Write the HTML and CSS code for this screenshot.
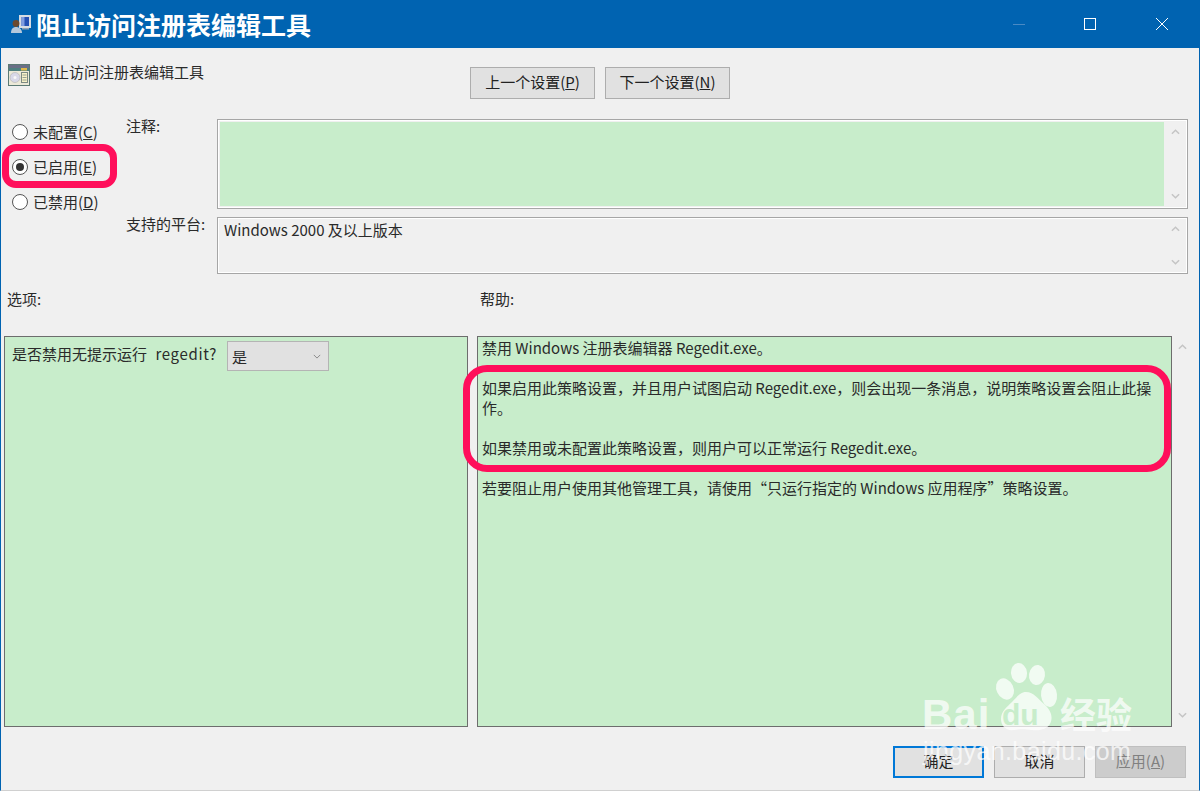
FILE: index.html
```html
<!DOCTYPE html>
<html lang="zh-CN">
<head>
<meta charset="utf-8">
<title>阻止访问注册表编辑工具</title>
<link rel="stylesheet" href="styles.css">
</head>
<body>
<div class="window">
  <header class="titlebar">
    <svg class="app-icon" width="20" height="20" viewBox="0 0 20 20">
      <rect x="8" y="1" width="12" height="13" fill="#d5dbe3"/>
      <rect x="10.5" y="3" width="7.5" height="9" fill="#2450b4"/>
      <rect x="10.5" y="3" width="3" height="9" fill="#7f9ce0"/>
      <rect x="11" y="14" width="7" height="1.5" fill="#8fa0b2"/>
      <circle cx="5" cy="9.5" r="3.4" fill="#6b4a30"/>
      <path d="M0 19c0-4 2-6 5-6s6 2 6 6z" fill="#b4c8dc"/>
    </svg>
    <h1 class="title">阻止访问注册表编辑工具</h1>
    <div class="caption-buttons">
      <span class="cap-btn"><svg width="14" height="14" viewBox="0 0 14 14"><path d="M1 7.5h12" stroke="#4a8ac4" fill="none"/></svg></span>
      <span class="cap-btn"><svg width="14" height="14" viewBox="0 0 14 14"><rect x="1.5" y="1.5" width="11" height="11" stroke="#fff" fill="none"/></svg></span>
      <span class="cap-btn"><svg width="14" height="14" viewBox="0 0 14 14"><path d="M1 1l12 12M13 1L1 13" stroke="#fff" fill="none"/></svg></span>
    </div>
  </header>

  <main class="content">
    <div class="head-row">
      <div class="policy-name">
        <svg class="policy-icon" width="22" height="22" viewBox="0 0 22 22">
          <rect x="0.5" y="0.5" width="21" height="21" fill="#ece9d8" stroke="#5c7a74"/>
          <rect x="1" y="1" width="20" height="3" fill="#6a6f86"/>
          <rect x="1" y="4" width="20" height="3" fill="#4f8080"/>
          <rect x="13" y="4" width="6" height="2.5" fill="#e0b84a"/>
          <circle cx="7" cy="13.5" r="5" fill="#d8d8e8" stroke="#a8a8a8" stroke-width="0.5"/>
          <circle cx="7" cy="13.5" r="1.5" fill="#f8f8f8"/>
          <rect x="13.5" y="8.5" width="6" height="10" fill="#f8f2c8" stroke="#7d8a84"/>
          <path d="M14.5 11h4M14.5 13.5h4M14.5 16h4" stroke="#7d8a84" stroke-width="0.8"/>
        </svg>
        <span>阻止访问注册表编辑工具</span>
      </div>
      <div class="nav-buttons">
        <button class="btn nav-btn">上一个设置(<u>P</u>)</button>
        <button class="btn nav-btn">下一个设置(<u>N</u>)</button>
      </div>
    </div>

    <div class="settings-row">
      <div class="radios">
        <div class="radio-row"><span class="radio"></span><span>未配置(<u>C</u>)</span></div>
        <div class="radio-row"><span class="radio checked"></span><span>已启用(<u>E</u>)</span></div>
        <div class="radio-row"><span class="radio"></span><span>已禁用(<u>D</u>)</span></div>
      </div>
      <div class="fields">
        <div class="field comment-field">
          <label class="field-label">注释:</label>
          <div class="box comment-box">
            <div class="box-fill"></div>
            <div class="mini-scroll"><svg class="chev" viewBox="0 0 10 6"><path d="M1 5l4-4 4 4"/></svg><svg class="chev" viewBox="0 0 10 6"><path d="M1 1l4 4 4-4"/></svg></div>
          </div>
        </div>
        <div class="field platform-field">
          <label class="field-label">支持的平台:</label>
          <div class="box platform-box">
            <div class="box-text">Windows 2000 及以上版本</div>
            <div class="mini-scroll"><svg class="chev" viewBox="0 0 10 6"><path d="M1 5l4-4 4 4"/></svg><svg class="chev" viewBox="0 0 10 6"><path d="M1 1l4 4 4-4"/></svg></div>
          </div>
        </div>
      </div>
    </div>

    <div class="section-labels">
      <span class="section-options">选项:</span>
      <span class="section-help">帮助:</span>
    </div>

    <div class="panels">
      <div class="panel options-panel">
        <span class="option-label">是否禁用无提示运行 <span class="latin">regedit?</span></span>
        <div class="select"><span>是</span><svg class="select-chev" viewBox="0 0 10 6"><path d="M1 1l4 4 4-4"/></svg></div>
      </div>
      <div class="panel help-panel">
        <p>禁用 Windows 注册表编辑器 Regedit.exe。</p>
        <p>如果启用此策略设置，并且用户试图启动 Regedit.exe，则会出现一条消息，说明策略设置会阻止此操作。</p>
        <p>如果禁用或未配置此策略设置，则用户可以正常运行 Regedit.exe。</p>
        <p>若要阻止用户使用其他管理工具，请使用“只运行指定的 Windows 应用程序”策略设置。</p>
      </div>
      <div class="help-scroll"><svg class="chev" viewBox="0 0 10 6"><path d="M1 5l4-4 4 4"/></svg><svg class="chev" viewBox="0 0 10 6"><path d="M1 1l4 4 4-4"/></svg></div>
    </div>

    <footer class="footer">
      <button class="btn foot-btn default">确定</button>
      <button class="btn foot-btn">取消</button>
      <button class="btn foot-btn disabled">应用(<u>A</u>)</button>
    </footer>
  </main>

  <div class="mark mark-radio"></div>
  <div class="mark mark-help"></div>

  <div class="watermark">
    <svg class="paw" width="240" height="120" viewBox="0 0 240 120">
      <ellipse cx="84" cy="29" rx="8.5" ry="11" transform="rotate(-25 84 29)"/>
      <ellipse cx="98" cy="13" rx="8" ry="10" transform="rotate(-6 98 13)"/>
      <ellipse cx="116" cy="15" rx="8" ry="10" transform="rotate(8 116 15)"/>
      <ellipse cx="128" cy="35" rx="8" ry="12" transform="rotate(-6 128 35)"/>
      <path d="M105 32c8 0 12 7 18 12 8 7 9 14 6 20-3 5-10 7-18 6-7-1-12-1-18 0-8 1-13-4-13-11 0-8 6-12 11-17 5-5 8-10 14-10z"/>
    </svg>
    <span class="wm-bai">Bai</span>
    <span class="wm-du">du</span>
    <span class="wm-cn">经验</span>
    <span class="wm-url">jingyan.baidu.com</span>
  </div>
</div>
</body>
</html>
```

FILE: styles.css
```css
* { box-sizing: border-box; }
html, body { margin: 0; padding: 0; }
body {
  width: 1200px;
  height: 791px;
  overflow: hidden;
  font-family: "Noto Sans CJK SC", "Liberation Sans", sans-serif;
  font-size: 15px;
  color: #2a2a2a;
  background: #f0f0f0;
}
.window {
  position: relative;
  width: 1200px;
  height: 791px;
  border: 1px solid #0063b1;
  border-top: 0;
  border-bottom-color: #d0d0d0;
  display: flex;
  flex-direction: column;
  overflow: hidden;
}
.titlebar {
  flex: 0 0 48px;
  background: #0063b1;
  display: flex;
  align-items: center;
  padding-left: 10px;
}
.app-icon { flex: none; margin-right: 5px; }
.title {
  margin: 0;
  flex: 1;
  font-size: 25px;
  line-height: 48px;
  font-weight: 700;
  color: #fff;
}
.caption-buttons { display: flex; padding-right: 1px; }
.cap-btn {
  width: 72px;
  height: 46px;
  display: flex;
  align-items: center;
  justify-content: center;
}
.cap-btn:first-child { width: 71px; }
.content {
  flex: 1;
  display: flex;
  flex-direction: column;
  background: #f0f0f0;
  min-height: 0;
}
.head-row {
  height: 71px;
  display: flex;
  padding-top: 19px;
}
.policy-name {
  width: 469px;
  padding: 0 0 0 7px;
  display: flex;
  align-items: flex-start;
  gap: 9px;
  height: 30px;
}
.policy-name span { line-height: 14px; margin-top: -2px; }
.policy-icon { flex: none; margin-top: -3px; }
.nav-buttons { display: flex; gap: 10px; }
.btn {
  font: inherit;
  color: #222;
  background: #e1e1e1;
  border: 1px solid #adadad;
  padding: 0 0 3px;
  white-space: nowrap;
}
.nav-btn { width: 125px; height: 32px; }
.settings-row { display: flex; height: 162px; }
.radios {
  width: 125px;
  padding: 2px 0 0 11px;
  display: flex;
  flex-direction: column;
  gap: 15px;
}
.radio-row {
  display: flex;
  align-items: center;
  gap: 5px;
  height: 20px;
}
.radio {
  width: 16px;
  height: 16px;
  margin-top: 2px;
  border-radius: 50%;
  border: 1px solid #555;
  background: #fff;
  flex: none;
  display: flex;
  align-items: center;
  justify-content: center;
}
.radio.checked::after {
  content: "";
  width: 8px;
  height: 8px;
  border-radius: 50%;
  background: #333;
}
.fields { flex: 1; display: flex; flex-direction: column; gap: 8px; }
.field { display: flex; }
.field-label {
  width: 91px;
  flex: none;
  line-height: 20px;
  margin-top: -3px;
}
.box {
  width: 971px;
  border: 1px solid #a6a6a6;
  background: #f0f0f0;
  display: flex;
  box-shadow: inset 0 0 0 1px #fff;
}
.comment-box { height: 90px; padding: 2px 1px 2px 2px; }
.platform-box { height: 57px; padding: 1px; }
.box-fill { flex: 1; background: #c8edcb; }
.box-text { flex: 1; padding: 0 0 0 5px; line-height: 22px; }
.mini-scroll {
  flex: 0 0 22px;
  display: flex;
  flex-direction: column;
  justify-content: space-between;
  align-items: center;
  padding: 7px 0;
  background: #f0f0f0;
}
.chev { width: 9px; height: 6px; fill: none; stroke: #c4c4c4; stroke-width: 1.6; display: block; }
.section-labels {
  height: 55px;
  display: flex;
  padding-top: 8px;
  line-height: 20px;
}
.section-options { width: 479px; padding-left: 6px; }
.panels {
  display: flex;
  height: 391px;
  padding-left: 3px;
}
.panel {
  background: #c8edcb;
  border: 1px solid #6d6d6d;
}
.options-panel {
  width: 464px;
  margin-right: 9px;
  display: flex;
  align-items: flex-start;
  padding: 3px 0 0 7px;
  gap: 10px;
}
.option-label { line-height: 20px; margin-top: 4px; word-spacing: 5px; }
.latin { letter-spacing: 0.7px; }
.select {
  width: 102px;
  height: 30px;
  background: #e1e1e1;
  border: 1px solid #b4b4b4;
  display: flex;
  align-items: center;
  justify-content: space-between;
  padding: 0 5px 0 4px;
  margin-top: 1px;
}
.select-chev { width: 8px; height: 5px; fill: none; stroke: #888; stroke-width: 1.2; margin-right: 2px; }
.help-panel {
  width: 695px;
  padding: 1px 12px 0 4px;
  line-height: 20px;
}
.help-panel p { margin: 0 0 20px; }
.help-scroll {
  flex: 0 0 20px;
  display: flex;
  flex-direction: column;
  justify-content: space-between;
  align-items: center;
  padding: 8px 0 9px;
}
.footer {
  display: flex;
  justify-content: flex-end;
  gap: 10px;
  padding: 19px 13px 0 0;
}
.foot-btn { width: 91px; height: 32px; }
.foot-btn.default { border: 2px solid #0078d7; }
.foot-btn.disabled { background: #cccccc; border-color: #bfbfbf; color: #808080; }
.mark {
  position: absolute;
  border: 7px solid #ff0f5b;
  pointer-events: none;
}
.mark-radio { left: 1px; top: 144px; width: 115px; height: 44px; border-radius: 14px; }
.mark-help { left: 462px; top: 365px; width: 708px; height: 107px; border-radius: 24px; }
.watermark {
  position: absolute;
  left: 920px;
  top: 660px;
  width: 240px;
  height: 120px;
  color: rgba(255, 255, 255, 0.74);
  pointer-events: none;
}
.paw { position: absolute; left: 0; top: 0; fill: rgba(255, 255, 255, 0.74); }
.wm-bai, .wm-du, .wm-cn, .wm-url { position: absolute; white-space: nowrap; font-family: "Liberation Sans", sans-serif; }
.wm-bai { left: 1px; top: 30px; font-size: 42px; line-height: 50px; letter-spacing: 1px; font-weight: 700; }
.wm-du { left: 81px; top: 40px; font-size: 30px; line-height: 30px; color: #c8edcb; font-weight: 700; }
.wm-cn { left: 139px; top: 30px; font-size: 36px; line-height: 46px; font-weight: 700; font-family: "Noto Sans CJK SC", sans-serif; }
.wm-url { left: 2px; top: 76px; font-size: 25px; line-height: 30px; letter-spacing: 0.4px; }
```
